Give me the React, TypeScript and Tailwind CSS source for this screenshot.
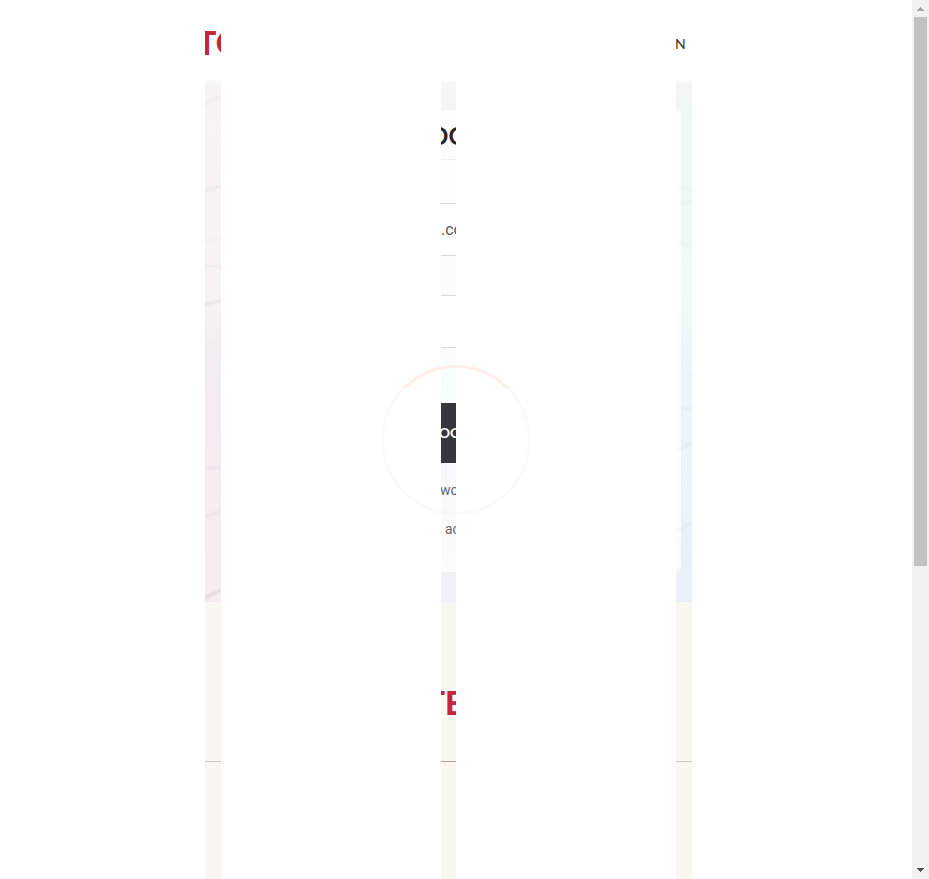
import React from "react";

type Stop = { at: string; color: string };
type Streak = { d: string; width: number; color: string };

function Marble({ id, stops, streaks }: { id: string; stops: Stop[]; streaks: Streak[] }) {
  return (
    <svg className="block h-[522px] w-full" viewBox="0 0 16 522" preserveAspectRatio="none" aria-hidden="true">
      <defs>
        <linearGradient id={id} x1="0" y1="0" x2="0" y2="1">
          {stops.map((s) => (
            <stop key={s.at} offset={s.at} stopColor={s.color} />
          ))}
        </linearGradient>
        <filter id={id + "-soft"} x="-50%" y="-50%" width="200%" height="200%">
          <feGaussianBlur stdDeviation="0.8" />
        </filter>
      </defs>
      <rect width="16" height="522" fill={`url(#${id})`} />
      <g filter={`url(#${id}-soft)`} fill="none">
        {streaks.map((s) => (
          <path key={s.d} d={s.d} stroke={s.color} strokeWidth={s.width} />
        ))}
      </g>
    </svg>
  );
}

function LeftStrip() {
  return (
    <div className="flex w-4 shrink-0 flex-col overflow-hidden">
      <a href="#home" className="-ml-2 flex h-20 items-center whitespace-nowrap pt-[6px] font-['Lato',sans-serif] text-[32px] leading-10 font-black text-[#c52638]">
        TO
      </a>
      <Marble
        id="warm"
        stops={[
          { at: "0%", color: "#fcfcfc" },
          { at: "1%", color: "#f6f4f3" },
          { at: "25%", color: "#f8f3f1" },
          { at: "42%", color: "#f7f3f1" },
          { at: "53%", color: "#f1edf0" },
          { at: "61%", color: "#f6ebf0" },
          { at: "100%", color: "#f7ecef" },
        ]}
        streaks={[
          { d: "M-2 25 Q7 19 18 16", width: 2, color: "#ebebec" },
          { d: "M-2 110 Q7 109 18 106", width: 2, color: "#e9e9e9" },
          { d: "M-2 163 L18 156", width: 2, color: "#f3f0ef" },
          { d: "M-2 188 Q7 184 18 188", width: 2, color: "#eae8e7" },
          { d: "M-2 225 Q7 222 18 221", width: 3, color: "#e7e5e5" },
          { d: "M-2 390 Q7 387 18 387", width: 2, color: "#ebe1e6" },
          { d: "M-2 437 L18 431", width: 2, color: "#ebe2e6" },
          { d: "M-2 519 L18 509", width: 3, color: "#e0d7db" },
        ]}
      />
      <div className="h-[159px] bg-[#f8f7f2]" />
      <hr className="border-t border-[#cccbc8]" />
      <div className="grow bg-[#f8f7f2]" />
    </div>
  );
}

function CentreStrip() {
  return (
    <div className="flex w-[15px] shrink-0 flex-col overflow-hidden whitespace-nowrap">
      <div className="h-20" />
      <div className="h-[30px] bg-linear-to-b from-white via-[#f5f6f6] via-10% to-[#f4f6f6]" />
      <form className="flex flex-col" onSubmit={(e) => e.preventDefault()}>
        <h1 className="flex h-[50px] items-center justify-center border-b border-[#efeff0] bg-[#fdfdfd] pt-[2px] font-['Lato',sans-serif] text-2xl font-bold text-[#2b2220]">
          OO
        </h1>
        <div className="h-[43px] bg-[#fcfdfd]" />
        <input
          type="text"
          aria-label="Email"
          defaultValue=".co"
          className="h-[53px] w-full border-y border-[#d9d9da] bg-white font-['Roboto',sans-serif] text-base text-[#55565e] outline-none"
        />
        <div className="h-[39px] bg-[#fbfcfc]" />
        <input
          type="password"
          aria-label="Password"
          className="h-[53px] w-full border-y border-[#d9d9da] bg-white outline-none"
        />
        <div className="h-[55px] bg-linear-to-b from-[#fbfcfd] to-[#f8fdfd]" />
        <button
          type="submit"
          className="flex h-[60px] items-center justify-center overflow-hidden bg-[#37363b] pl-[3px] font-['Lato',sans-serif] text-sm font-bold text-white"
        >
          OO
        </button>
        <div className="flex h-[109px] flex-col bg-linear-to-b from-[#f9f9fd] to-[#fcfcfd] pt-4 font-['Roboto',sans-serif] text-sm text-[#66666c]">
          <a href="#reset" className="-ml-px h-10 leading-[22px]">wo</a>
          <a href="#register" className="pl-1 leading-5">ac</a>
        </div>
      </form>
      <div className="h-[30px] bg-[#f1f0f6]" />
      <h2 className="flex h-[159px] items-center justify-center bg-[#f8f7f2] pt-[42px] pr-2 font-['Lato',sans-serif] text-[32px] leading-10 font-black text-[#c52638]">
        TE
      </h2>
      <hr className="border-t border-[#b8a296]" />
      <div className="grow bg-[#f8f7f2]" />
    </div>
  );
}

function RightStrip() {
  return (
    <div className="flex w-4 shrink-0 flex-col overflow-hidden">
      <a href="#login" className="-ml-px flex h-20 items-center pt-2 font-['Lato',sans-serif] text-sm text-[#3a3430]">
        N
      </a>
      <div className="relative">
        <Marble
          id="cool"
          stops={[
            { at: "0%", color: "#fcfcfc" },
            { at: "1%", color: "#f3f6f5" },
            { at: "20%", color: "#f2f7f8" },
            { at: "40%", color: "#f2f9f8" },
            { at: "58%", color: "#eef5f8" },
            { at: "80%", color: "#edf3f7" },
            { at: "90%", color: "#eaf0f9" },
            { at: "100%", color: "#ebf1f8" },
          ]}
          streaks={[
            { d: "M3 108 L18 109", width: 2, color: "#eaf0f1" },
            { d: "M3 124 L18 122", width: 2, color: "#edf3f3" },
            { d: "M3 160 Q9 166 18 164", width: 2, color: "#ecf3f3" },
            { d: "M3 288 Q9 294 18 294", width: 2, color: "#eaf1f4" },
            { d: "M3 328 L18 329", width: 3, color: "#e4edef" },
            { d: "M-2 372 L18 362", width: 2, color: "#e1e8eb" },
            { d: "M-2 451 L18 443", width: 2, color: "#e1e8ef" },
            { d: "M5 487 L18 481", width: 2, color: "#e5ebf2" },
          ]}
        />
        <div className="absolute inset-y-[30px] left-0 w-[5px] rounded-r-[5px] bg-white/75" />
      </div>
      <div className="h-[159px] bg-[#f8f7f2]" />
      <hr className="border-t border-[#cccbc8]" />
      <div className="grow bg-[#f8f7f2]" />
    </div>
  );
}

function ScrollTrack() {
  return (
    <div className="flex h-screen w-[17px] shrink-0 flex-col items-center bg-[#f1f1f1]" aria-hidden="true">
      <svg className="h-[17px] w-[17px] shrink-0" viewBox="0 0 17 17" shapeRendering="crispEdges">
        <path d="M5 11h7v-1h-1V9h-1V8H9V7H8v1H7v1H6v1H5z" fill="#a3a3a3" />
      </svg>
      <div className="flex w-full grow flex-col items-center">
        <div className="h-[65%] w-[13px] bg-[#c1c1c1]" />
      </div>
      <svg className="h-[17px] w-[17px] shrink-0" viewBox="0 0 17 17" shapeRendering="crispEdges">
        <path d="M5 6h7v1h-1v1h-1v1H9v1H8V9H7V8H6V7H5z" fill="#505050" />
      </svg>
    </div>
  );
}

export default function App() {
  return (
    <div className="flex min-h-screen bg-white">
      <main className="relative flex min-w-0 grow justify-center gap-[220px] overflow-hidden pr-[15px]">
        <LeftStrip />
        <CentreStrip />
        <RightStrip />
        <div
          role="status"
          aria-label="Loading"
          className="pointer-events-none absolute top-1/2 left-1/2 size-[150px] -translate-1/2 rounded-full border-3 border-[#f2f2f2]/35 border-t-[#ffe0d4]/50"
        />
      </main>
      <ScrollTrack />
    </div>
  );
}
